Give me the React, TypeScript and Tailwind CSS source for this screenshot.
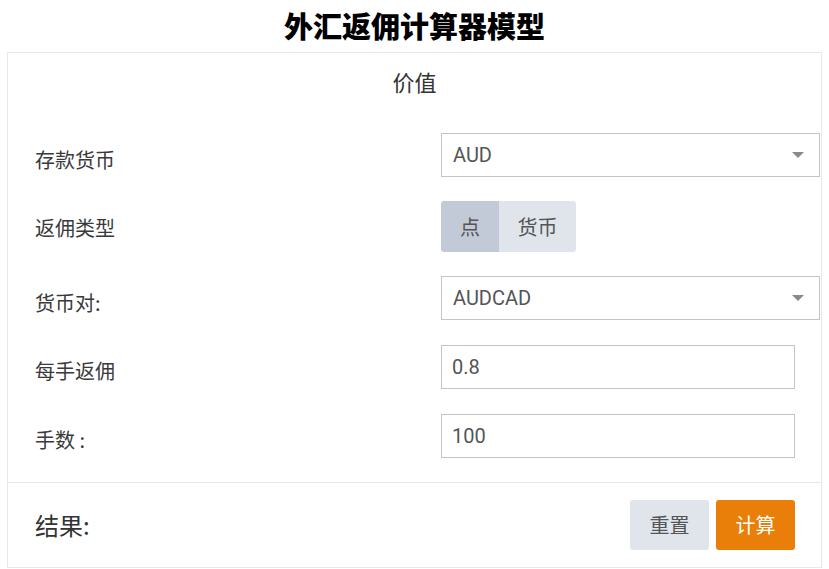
import React from "react";

function Arrow() {
  return (
    <svg width="12" height="6" viewBox="0 0 12 6" className="shrink-0">
      <polygon points="0,0 12,0 6,6" fill="#8a8a8a" />
    </svg>
  );
}

function Select({ value }: { value: string }) {
  return (
    <div className="flex h-[44px] w-[379px] items-center justify-between border border-[#c4c4c4] bg-white pl-[11px] pr-[15px] font-['Roboto',sans-serif] text-[20px] text-[#555]">
      <span>{value}</span>
      <Arrow />
    </div>
  );
}

function Input({ value }: { value: string }) {
  return (
    <div className="flex h-[44px] w-[354px] items-center border border-[#c4c4c4] bg-white pl-[10px] font-['Roboto',sans-serif] text-[20px] text-[#555]">
      {value}
    </div>
  );
}

function Row({ label, children }: { label: string; children: React.ReactNode }) {
  return (
    <div className="flex items-start">
      <div className="mt-[13px] w-[433px] pl-[27px] text-[20px] leading-[28px] text-[#3a3a3a]">{label}</div>
      {children}
    </div>
  );
}

export default function App() {
  return (
    <div className="h-[569px] w-[829px] bg-white font-['Noto_Sans_CJK_SC','Noto_Sans',sans-serif]">
      <div className="flex h-[52px] items-center justify-center pb-[2px]">
        <h1 className="text-[29px] font-black leading-none text-black">外汇返佣计算器模型</h1>
      </div>
      <div className="mx-[7px] h-[516px] border border-[#e5e8ec]">
        <div className="flex h-[56px] items-center justify-center text-[22px] text-[#333]">价值</div>
        <div className="flex flex-col gap-[24px] pt-[24px]">
          <Row label="存款货币">
            <Select value="AUD" />
          </Row>
          <Row label="返佣类型">
            <div className="flex h-[51px] overflow-hidden rounded-[3px] text-[20px]">
              <div className="flex w-[58px] items-center justify-center bg-[#c2cad7] text-[#555]">点</div>
              <div className="flex w-[77px] items-center justify-center bg-[#e0e5ec] text-[#555]">货币</div>
            </div>
          </Row>
          <Row label="货币对:">
            <Select value="AUDCAD" />
          </Row>
          <Row label="每手返佣">
            <div className="pt-px">
              <Input value="0.8" />
            </div>
          </Row>
          <Row label="手数 :">
            <div className="pt-px">
              <Input value="100" />
            </div>
          </Row>
        </div>
        <div className="mt-[24px] flex h-[84px] items-center justify-between border-t border-[#e5e8ec] pl-[27px] pr-[26px]">
          <div className="text-[24px] text-[#333]">结果:</div>
          <div className="flex gap-[7px]">
            <button className="flex h-[50px] w-[79px] items-center justify-center rounded-[3px] bg-[#e0e5ec] text-[20px] text-[#555]">
              重置
            </button>
            <button className="flex h-[50px] w-[79px] items-center justify-center rounded-[3px] bg-[#e97f09] text-[20px] text-white">
              计算
            </button>
          </div>
        </div>
      </div>
    </div>
  );
}
